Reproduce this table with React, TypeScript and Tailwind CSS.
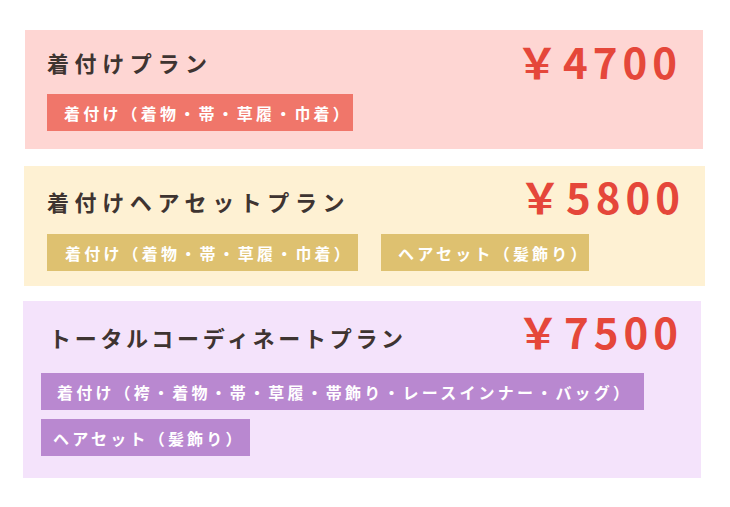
const FONT = "font-['Noto_Sans_CJK_JP','Noto_Sans',sans-serif]";

type BadgeItem = { text: string; cls: string };

type Plan = {
  title: string;
  price: string;
  badges: BadgeItem[][];
  card: string;
  head: string;
  titleCls: string;
  badgeWrap: string;
  badge: string;
};

const PLANS: Plan[] = [
  {
    title: "着付けプラン",
    price: "￥4700",
    badges: [[{ text: "着付け（着物・帯・草履・巾着）", cls: "w-[306px] pl-[17px]" }]],
    card: "ml-[25px] w-[678px] h-[119px] mt-[30px] bg-[#fed6d3]",
    head: "pt-[10px] pl-[22px] pr-[21px]",
    titleCls: "mt-[11px] tracking-[5.6px]",
    badgeWrap: "mt-[12px] pl-[22px]",
    badge: "bg-[#f0766a]",
  },
  {
    title: "着付けヘアセットプラン",
    price: "￥5800",
    badges: [
      [
        { text: "着付け（着物・帯・草履・巾着）", cls: "w-[311px] pl-[18px]" },
        { text: "ヘアセット（髪飾り）", cls: "w-[208px] pl-[17px]" },
      ],
    ],
    card: "ml-[24px] w-[681px] h-[120px] mt-[17px] bg-[#fef1d3]",
    head: "pt-[9px] pl-[23px] pr-[20px]",
    titleCls: "mt-[15px] tracking-[5.6px]",
    badgeWrap: "mt-[17px] pl-[23px]",
    badge: "bg-[#dec170]",
  },
  {
    title: "トータルコーディネートプラン",
    price: "￥7500",
    badges: [
      [{ text: "着付け（袴・着物・帯・草履・帯飾り・レースインナー・バッグ）", cls: "w-[603px] pl-[16px]" }],
      [{ text: "ヘアセット（髪飾り）", cls: "w-[209px] pl-[12px]" }],
    ],
    card: "ml-[23px] w-[678px] h-[177px] mt-[15px] bg-[#f4e3fb]",
    head: "pt-[9px] pl-[26px] pr-[18px]",
    titleCls: "mt-[16px] tracking-[3.7px]",
    badgeWrap: "mt-[21px] pl-[18px]",
    badge: "bg-[#b988d0]",
  },
];

export default function App() {
  return (
    <div className={`w-[730px] h-[507px] bg-white overflow-hidden pt-px -mt-px ${FONT}`}>
      {PLANS.map((p) => (
        <div key={p.title} className={`flex flex-col ${p.card}`}>
          <div className={`flex justify-between items-start ${p.head}`}>
            <h2 className={`text-[22px] leading-[22px] font-bold text-[#3e3431] ${p.titleCls}`}>
              {p.title}
            </h2>
            <div className="text-[42px] leading-[42px] font-bold tracking-[5px] text-[#e5473a]">
              {p.price}
            </div>
          </div>
          <div className={`flex flex-col gap-[9px] ${p.badgeWrap}`}>
            {p.badges.map((row, i) => (
              <div key={i} className="flex gap-[23px]">
                {row.map((b) => (
                  <span
                    key={b.text}
                    className={`h-[37px] flex items-center whitespace-nowrap text-[16px] leading-[16px] font-bold tracking-[3.2px] text-white ${p.badge} ${b.cls}`}
                  >
                    {b.text}
                  </span>
                ))}
              </div>
            ))}
          </div>
        </div>
      ))}
    </div>
  );
}
